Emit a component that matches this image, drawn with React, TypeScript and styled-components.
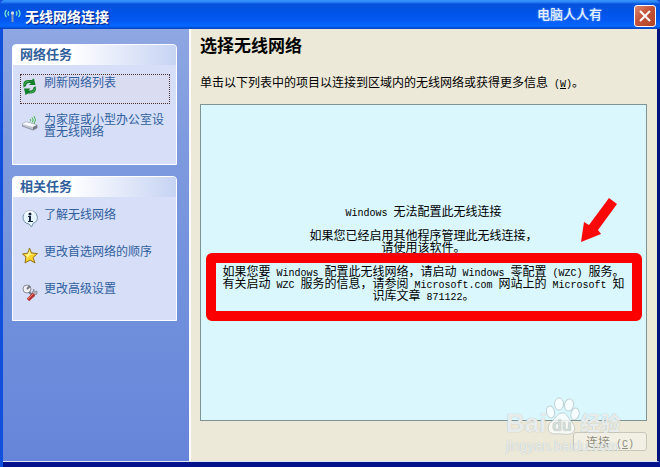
import React from "react";
import styled, { createGlobalStyle } from "styled-components";

const GlobalStyle = createGlobalStyle`
  *, *::before, *::after { box-sizing: border-box; }
  body { margin: 0; background: #04127f; }
  body, button { font: 12px/12px "Noto Sans CJK SC", sans-serif; color: #000; }
  h1, h2, h3, p, ul { margin: 0; padding: 0; font-weight: normal; }
  ul { list-style: none; }
`;

const Window = styled.div`
  position: relative;
  display: flex;
  flex-direction: column;
  min-height: 100vh;
  background: #1150dc;
`;

const TitleBar = styled.header`
  display: flex;
  align-items: center;
  gap: 4px;
  height: 29px;
  padding: 3px 4px 1px;
  border-radius: 5px 5px 0 0;
  background: linear-gradient(#3a94fb 0, #2b86f8 2px, #0752dc 4px, #0053e6 12px, #0458f2 20px, #0668ff 26px, #0342bd 29px);
`;

const WindowTitle = styled.h1`
  flex: 1;
  color: #fff;
  font-size: 14px;
  line-height: 20px;
  font-weight: bold;
  text-shadow: 1px 1px 1px #0a2280;
`;

const Signature = styled.span`
  margin: 0 28px 4px 0;
  color: #e6f1ff;
  font-size: 13px;
  line-height: 20px;
  font-weight: 500;
  text-shadow: 0 0 2px #6fa8ff;
`;

const CloseButton = styled.button`
  display: grid;
  place-items: center;
  width: 22px;
  height: 22px;
  padding: 0;
  border: 1px solid #fff;
  border-radius: 3px;
  background: linear-gradient(135deg, #dc8a70, #c4543a 45%, #b04426);
`;

const Body = styled.div`
  flex: 1;
  display: flex;
  margin: 0 0 5px 3px;
  border-right: 3px solid #04127f;
  border-bottom: 1px solid #dfe6f7;
  background: #ece9d8;
  box-shadow: 0 5px 0 #04128c;
`;

const Sidebar = styled.aside`
  display: flex;
  flex-direction: column;
  gap: 11px;
  width: 188px;
  padding: 15px 12px 0 9px;
  border-right: 2px solid #fff;
  background: linear-gradient(#8fa7e2, #7f9bdf 25%, #7090dc 65%, #6685da);
`;

const Card = styled.section<{ $tall?: boolean }>`
  min-height: ${(p) => (p.$tall ? 145 : 121)}px;
  border: 1px solid #fff;
  border-radius: 4px 4px 0 0;
  background: #d6dff7;
`;

const CardTitle = styled.h2`
  height: 20px;
  padding-left: 7px;
  border-radius: 3px 3px 0 0;
  background: linear-gradient(90deg, #fff 35%, #c6d3f3);
  color: #30609c;
  font-size: 13px;
  line-height: 18px;
  font-weight: bold;
`;

const TaskList = styled.ul`
  display: flex;
  flex-direction: column;
  gap: 7px;
  padding: 9px 6px 0 7px;
`;

const Task = styled.a<{ $focused?: boolean }>`
  display: grid;
  grid-template-columns: 16px 1fr;
  gap: 6px;
  min-height: 30px;
  padding: 1px 0 0 1px;
  border: 1px ${(p) => (p.$focused ? "dotted #4a3030" : "solid transparent")};
  background: ${(p) => (p.$focused ? "#dadcf2" : "none")};
  color: #31609f;
  text-decoration: none;

  svg { margin-top: 2px; }
`;

const Main = styled.main`
  flex: 1;
  min-width: 0;
  display: flex;
  flex-direction: column;
  padding: 5px 10px 10px 9px;
`;

const Heading = styled.h2`
  font-size: 17px;
  line-height: 22px;
  font-weight: bold;
`;

const Hint = styled.p`
  margin: 18px 0 14px;
  line-height: 16px;
  white-space: nowrap;
`;

const Latin = styled.span`
  font-family: "Liberation Mono", monospace;
  font-size: 10px;
  line-height: 0;
`;

const NetworkPanel = styled.div`
  flex: 1;
  display: flex;
  flex-direction: column;
  align-items: center;
  justify-content: center;
  gap: 12px;
  padding-bottom: 20px;
  border: 1px solid #7f9494;
  background: #d9f7fd;
  text-align: center;
  white-space: nowrap;
`;

const Marked = styled.p`
  position: relative;

  &::after {
    content: "";
    position: absolute;
    inset: -12px -17px -20px -16px;
    border: 10px solid #fb0000;
    border-radius: 6px;
  }
`;

const Arrow = styled.svg`
  position: absolute;
  right: 6px;
  top: -67px;
`;

const Footer = styled.footer`
  display: flex;
  justify-content: flex-end;
  padding-top: 11px;
`;

const ConnectButton = styled.button`
  width: 74px;
  height: 19px;
  padding: 0;
  border: 1px solid #c9c7ba;
  border-radius: 3px;
  background: #f2f0e4;
  color: #8f8d80;
`;

const Watermark = styled.div`
  position: absolute;
  right: 36px;
  bottom: 13px;
  width: 118px;
  color: rgba(255, 255, 255, 0.75);
  text-shadow: 0 0 1px #a3b0b0;
  pointer-events: none;
  white-space: nowrap;
`;

const WatermarkLogo = styled.div`
  display: flex;
  align-items: flex-end;
  margin-bottom: 3px;
  font: bold 26px/24px "Liberation Sans", sans-serif;
`;

const WatermarkName = styled.span`
  font: bold 20px/24px "Noto Sans CJK SC", sans-serif;
`;

const WatermarkUrl = styled.div`
  font: 14px/16px "Liberation Sans", sans-serif;
`;

function AntennaIcon() {
  return (
    <svg width="17" height="16" viewBox="0 0 17 16" fill="none" aria-hidden="true">
      <path d="M2.5 2Q-.5 5.5 2.5 9M5 3.5Q3 5.5 5 7.5M12 3.5q2 2 0 4M14.500 2q3 3.500 0 7" stroke="#7cecc9" strokeWidth="1.2" />
      <path d="M8.500 6v8" stroke="#8c9bb4" strokeWidth="2" />
      <circle cx="8.500" cy="5" r="1.700" fill="#c9d5e4" />
    </svg>
  );
}

function RefreshIcon() {
  return (
    <svg width="16" height="18" viewBox="0 0 16 18" aria-hidden="true">
      <path d="M1.500 9.500Q0 2 6 2h3.500L12 .5 13.500 7H7l2-2H7Q4.500 5 4 8z" fill="#15802b" />
      <path d="M13.500 8q2 7-4 7.500H6L3.500 17 2 10.500h6.500l-2 2h2q2.500 0 3-3z" fill="#15802b" />
      <path d="M2.500 7Q3 3 7 3.500M8 14.500q4.500 0 5-4" fill="none" stroke="#5cb865" strokeWidth=".8" />
    </svg>
  );
}

function RouterIcon() {
  return (
    <svg width="16" height="17" viewBox="0 0 16 17" aria-hidden="true">
      <path d="m0 9 4-2 11 3v3l-4 2-11-4z" fill="#bfc3d2" stroke="#777c91" strokeWidth=".7" />
      <path d="m0 9 4-2 11 3-4 2z" fill="#f8f9ff" />
      <path d="m11 12 4-2v3l-4 2z" fill="#777989" />
      <path d="M8 4q1.500 1 0 2.500M10 2.500q2.500 2.500 0 5M12 1q3 4 0 8" fill="none" stroke="#43b84b" />
    </svg>
  );
}

function InfoIcon() {
  return (
    <svg width="16" height="18" viewBox="0 0 16 18" aria-hidden="true">
      <path d="M8 1a7 6.500 0 0 1 3 12.500L9.500 17 7 14A6.500 6.500 0 0 1 8 1Z" fill="#e7f6ff" stroke="#718fac" />
      <path d="M3 4Q7 0 12 3" fill="none" stroke="#fff" strokeWidth="2" />
      <circle cx="8" cy="4" r="1.500" fill="#16243e" />
      <path d="M6 6h3v5h2v1H6v-1h1V7H6z" fill="#16243e" />
    </svg>
  );
}

function StarIcon() {
  return (
    <svg width="16" height="17" viewBox="0 0 16 17" aria-hidden="true">
      <path d="m7.500 1 2 5 6 .5-4.500 4 2 5.500-5-3-5 3 1-6L.5 7 6 6z" fill="#ffd42c" stroke="#94721c" />
      <path d="m7.500 3 1 4 4 .5-5 .5-3 4 .5-3-2-1 3-1z" fill="#fff591" />
    </svg>
  );
}

function ToolsIcon() {
  return (
    <svg width="16" height="17" viewBox="0 0 16 17" aria-hidden="true">
      <circle cx="5" cy="5" r="4" fill="#eef0f4" stroke="#8c8c96" />
      <path d="m5 5 3-3M7 8l5 5" stroke="#777783" strokeWidth="2" />
      <path d="M12 5v3l3-1v3l-3 1-2-2z" fill="#b0b2bd" stroke="#777783" strokeWidth=".6" />
      <path d="m12 10-6 6" stroke="#b83234" strokeWidth="3.500" />
      <path d="m11 10-5 5" stroke="#f77768" />
    </svg>
  );
}

function PawIcon() {
  return (
    <svg width="34" height="38" viewBox="0 0 34 38" aria-hidden="true">
      <g fill="#fff" fillOpacity=".75" stroke="#9eabab" strokeOpacity=".5">
        <ellipse cx="4.500" cy="15" rx="4" ry="6" transform="rotate(-12 4.500 15)" />
        <ellipse cx="13" cy="7" rx="4.500" ry="6" />
        <ellipse cx="23" cy="8" rx="4.500" ry="6" transform="rotate(12 23 8)" />
        <ellipse cx="29" cy="17" rx="4" ry="6" transform="rotate(15 29 17)" />
        <path d="M17 16c4 0 5 5 8 8 4 4 6 11-1 13-4 1-10-1-15 0-7 0-9-7-4-12 5-4 6-9 12-9Z" />
      </g>
      <text x="16" y="34" textAnchor="middle" fontFamily="Liberation Sans, sans-serif" fontWeight="bold" fontSize="16" fill="#d3dcd8">du</text>
    </svg>
  );
}

export default function App() {
  return (
    <>
      <GlobalStyle />
      <Window>
        <TitleBar>
          <AntennaIcon />
          <WindowTitle>无线网络连接</WindowTitle>
          <Signature>电脑人人有</Signature>
          <CloseButton aria-label="关闭">
            <svg width="14" height="14" viewBox="0 0 14 14" aria-hidden="true">
              <path d="m2 2 10 10M12 2 2 12" stroke="#fff" strokeWidth="2" />
            </svg>
          </CloseButton>
        </TitleBar>
        <Body>
          <Sidebar>
            <Card>
              <CardTitle>网络任务</CardTitle>
              <TaskList>
                <li><Task href="#refresh" $focused><RefreshIcon />刷新网络列表</Task></li>
                <li><Task href="#setup"><RouterIcon />为家庭或小型办公室设置无线网络</Task></li>
              </TaskList>
            </Card>
            <Card $tall>
              <CardTitle>相关任务</CardTitle>
              <TaskList>
                <li><Task href="#learn"><InfoIcon />了解无线网络</Task></li>
                <li><Task href="#order"><StarIcon />更改首选网络的顺序</Task></li>
                <li><Task href="#advanced"><ToolsIcon />更改高级设置</Task></li>
              </TaskList>
            </Card>
          </Sidebar>
          <Main>
            <Heading>选择无线网络</Heading>
            <Hint>单击以下列表中的项目以连接到区域内的无线网络或获得更多信息<Latin> (<u>W</u>)</Latin>。</Hint>
            <NetworkPanel>
              <p><Latin>Windows </Latin>无法配置此无线连接</p>
              <p>如果您已经启用其他程序管理此无线连接，<br />请使用该软件。</p>
              <Marked>
                如果您要<Latin> Windows </Latin>配置此无线网络，请启动<Latin> Windows </Latin>零配置<Latin> (WZC) </Latin>服务。<br />
                有关启动<Latin> WZC </Latin>服务的信息，请参阅<Latin> Microsoft.com </Latin>网站上的<Latin> Microsoft </Latin>知<br />
                识库文章<Latin> 871122</Latin>。
                <Arrow width="40" height="46" viewBox="0 0 40 46" aria-hidden="true">
                  <path d="M30 0l8 6-19 26 3 4-20 8 3-20 5 3z" fill="#fb0808" />
                </Arrow>
              </Marked>
            </NetworkPanel>
            <Footer>
              <ConnectButton disabled>连接<Latin> (<u>C</u>)</Latin></ConnectButton>
            </Footer>
          </Main>
        </Body>
        <Watermark aria-hidden="true">
          <WatermarkLogo>Bai<PawIcon /><WatermarkName>经验</WatermarkName></WatermarkLogo>
          <WatermarkUrl>jingyan.baidu.com</WatermarkUrl>
        </Watermark>
      </Window>
    </>
  );
}
